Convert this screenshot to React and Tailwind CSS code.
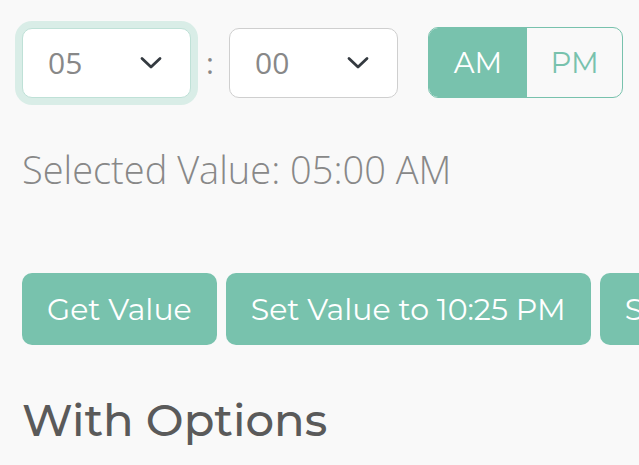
const sans = "font-['Montserrat','Open_Sans','Liberation_Sans',sans-serif]";

function Chevron() {
  return (
    <svg width="22" height="14" viewBox="0 0 22 14" fill="none" className="text-[#343a40]">
      <path d="M2 2.5 L11 11 L20 2.5" stroke="currentColor" strokeWidth="2.8" strokeLinecap="round" strokeLinejoin="round" />
    </svg>
  );
}

function Select({ value, focused }) {
  return (
    <div
      className={
        "flex h-[70px] w-[169px] items-center justify-between rounded-[10px] border bg-white pl-[25px] pr-[28px] " +
        (focused
          ? "border-[#bfe1d7] shadow-[0_0_0_7px_#d9ede7]"
          : "border-[#cfcfcf]")
      }
    >
      <span className="font-['Open_Sans',sans-serif] text-[30px] text-[#888]">{value}</span>
      <Chevron />
    </div>
  );
}

export default function App() {
  return (
    <div className="min-h-screen w-screen overflow-hidden bg-[#f9f9f9] pl-[22px] pt-[27px]">
      <div className="flex items-center">
        <Select value="05" focused />
        <span className="w-[38px] text-center font-['Open_Sans',sans-serif] text-[30px] text-[#888]">:</span>
        <Select value="00" />
        <div className="ml-[30px] flex h-[71px] w-[195px] overflow-hidden rounded-[10px] border border-[#78c2ad]">
          <button className={sans + " w-[98px] bg-[#78c2ad] text-[29px] text-white"}>AM</button>
          <button className={sans + " flex-1 bg-transparent text-[29px] text-[#78c2ad]"}>PM</button>
        </div>
      </div>

      <p className="mt-[43px] font-['Open_Sans',sans-serif] text-[38px] font-light text-[#888]">
        Selected Value: 05:00 AM
      </p>

      <div className="mt-[75px] flex gap-[9px] whitespace-nowrap">
        {["Get Value", "Set Value to 10:25 PM", "Set Value to Null"].map((t) => (
          <button
            key={t}
            className={sans + " h-[72px] shrink-0 rounded-[10px] bg-[#78c2ad] px-[25px] text-[30px] text-white"}
          >
            {t}
          </button>
        ))}
      </div>

      <h2 className={sans + " mt-[41px] text-[45px] font-medium text-[#5a5a5a]"}>With Options</h2>
    </div>
  );
}
